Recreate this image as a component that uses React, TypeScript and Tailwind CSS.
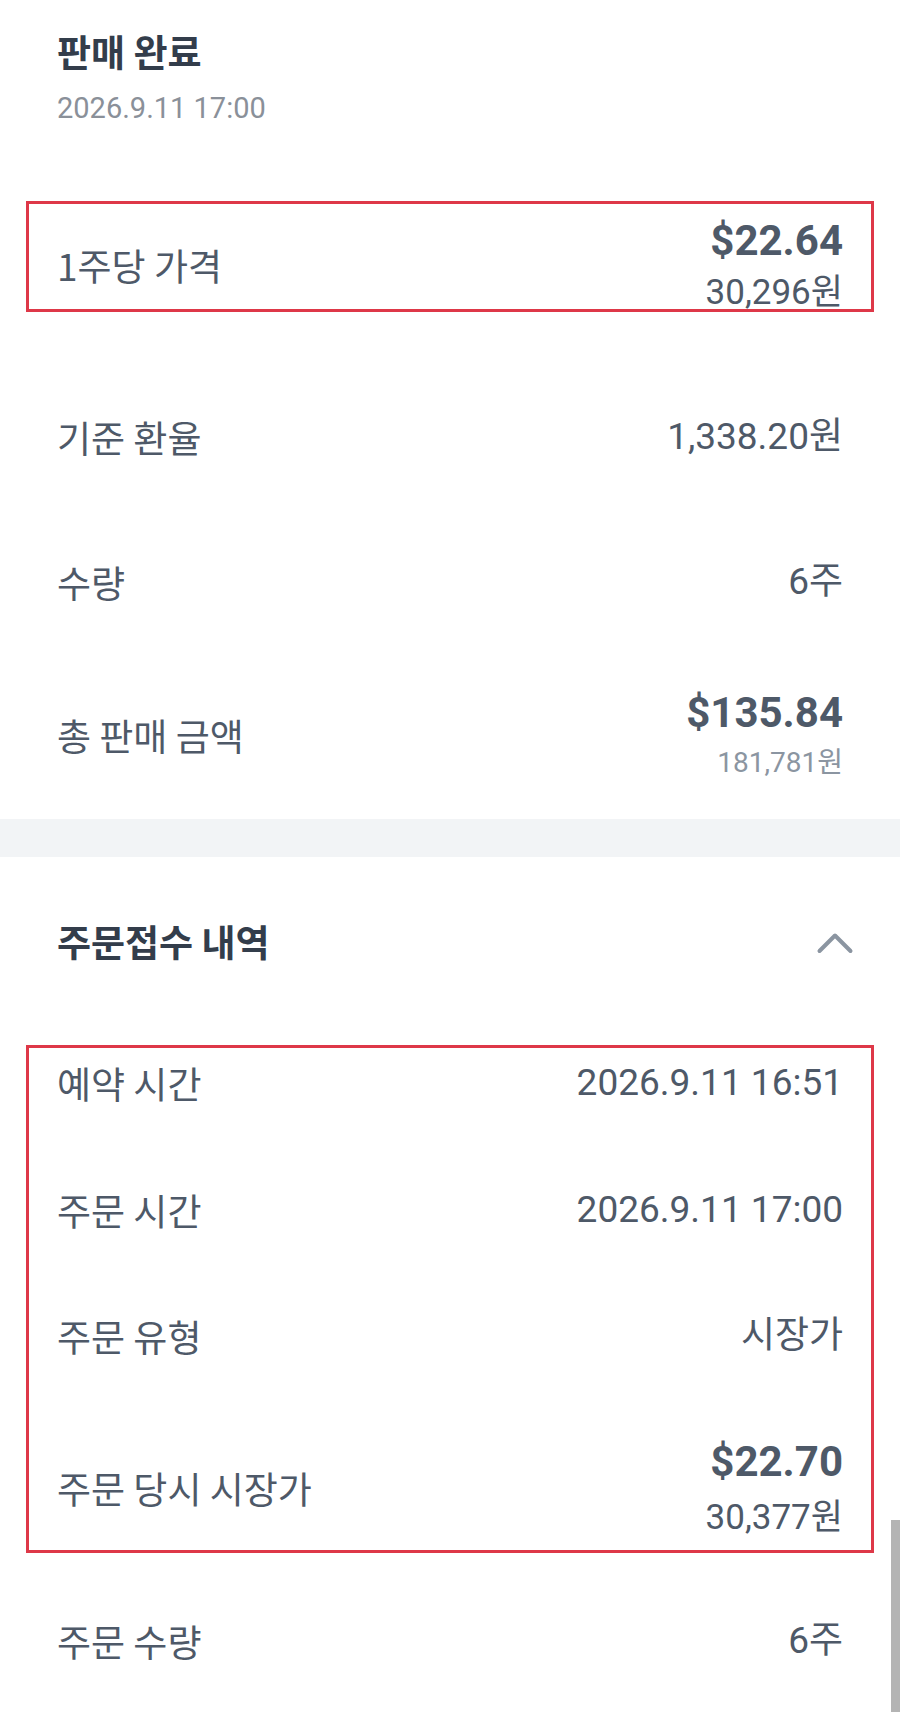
import React from 'react';

const KR = { fontFamily: '"Noto Sans CJK KR", "Noto Sans", sans-serif' };
const NUM = { fontFamily: 'Roboto, "Noto Sans CJK KR", sans-serif' };

function Label({ children }: { children: React.ReactNode }) {
  return (
    <span style={KR} className="text-[37px] leading-[44px] text-[#4e5968]">
      {children}
    </span>
  );
}

function Value({ children }: { children: React.ReactNode }) {
  return (
    <span style={NUM} className="text-[37px] leading-[44px] text-[#4e5968]">
      {children}
    </span>
  );
}

function Row({ label, value, className = '' }: { label: string; value: string; className?: string }) {
  return (
    <div className={`flex h-[44px] items-center justify-between ${className}`}>
      <Label>{label}</Label>
      <Value>{value}</Value>
    </div>
  );
}

function PriceRow({
  label,
  usd,
  krw,
  gap,
  muted = false,
  className = '',
}: {
  label: string;
  usd: string;
  krw: string;
  gap: string;
  muted?: boolean;
  className?: string;
}) {
  return (
    <div className={`flex items-center justify-between ${className}`}>
      <Label>{label}</Label>
      <div className={`flex flex-col items-end ${gap}`}>
        <span style={NUM} className="text-[42px] font-bold leading-[48px] text-[#4e5968]">
          {usd}
        </span>
        {muted ? (
          <span style={NUM} className="text-[28px] leading-[36px] text-[#8b95a1]">
            {krw}
          </span>
        ) : (
          <span style={NUM} className="text-[35px] leading-[40px] text-[#4e5968]">
            {krw}
          </span>
        )}
      </div>
    </div>
  );
}

export default function App() {
  return (
    <div className="relative min-h-[1712px] w-[900px] overflow-hidden bg-white">
      {/* 판매 완료 */}
      <section className="px-[57px] pb-[38px] pt-[29px]">
        <h1 style={KR} className="text-[37px] font-bold leading-[44px] text-[#333d4b]">
          판매 완료
        </h1>
        <p style={NUM} className="mt-[17px] text-[29px] leading-[36px] text-[#8a9099]">
          2026.9.11 17:00
        </p>

        <div className="mx-[-31px] mt-[75px] h-[111px] border-[3px] border-[#de3848] px-[28px] pt-[13px]">
          <PriceRow label="1주당 가격" usd="$22.64" krw="30,296원" gap="gap-[8px]" />
        </div>

        <Row label="기준 환율" value="1,338.20원" className="mt-[103px]" />
        <Row label="수량" value="6주" className="mt-[101px]" />
        <PriceRow
          label="총 판매 금액"
          usd="$135.84"
          krw="181,781원"
          gap="gap-[8px]"
          muted
          className="mt-[85px]"
        />
      </section>

      <div className="h-[38px] bg-[#f2f4f6]" />

      {/* 주문접수 내역 */}
      <section className="px-[57px] pt-[62px]">
        <div className="flex h-[44px] items-center justify-between">
          <h2 style={KR} className="text-[37px] font-bold leading-[44px] text-[#333d4b]">
            주문접수 내역
          </h2>
          <svg width="40" height="24" viewBox="0 0 40 24" className="mr-[-12px] mt-[4px]" fill="none">
            <path
              d="M4.5 20 L20 4.5 L35.5 20"
              stroke="#8b95a1"
              strokeWidth="4"
              strokeLinecap="round"
              strokeLinejoin="round"
            />
          </svg>
        </div>

        <div className="mx-[-31px] mt-[82px] border-[3px] border-[#de3848] px-[28px] pb-[12px] pt-[13px]">
          <Row label="예약 시간" value="2026.9.11 16:51" />
          <Row label="주문 시간" value="2026.9.11 17:00" className="mt-[83px]" />
          <Row label="주문 유형" value="시장가" className="mt-[82px]" />
          <PriceRow label="주문 당시 시장가" usd="$22.70" krw="30,377원" gap="gap-[12px]" className="mt-[80px]" />
        </div>

        <Row label="주문 수량" value="6주" className="mt-[66px]" />
      </section>

      {/* scroll indicator */}
      <div className="absolute bottom-0 right-0 h-[192px] w-[9px] bg-[#b4b4b4]" />
    </div>
  );
}
